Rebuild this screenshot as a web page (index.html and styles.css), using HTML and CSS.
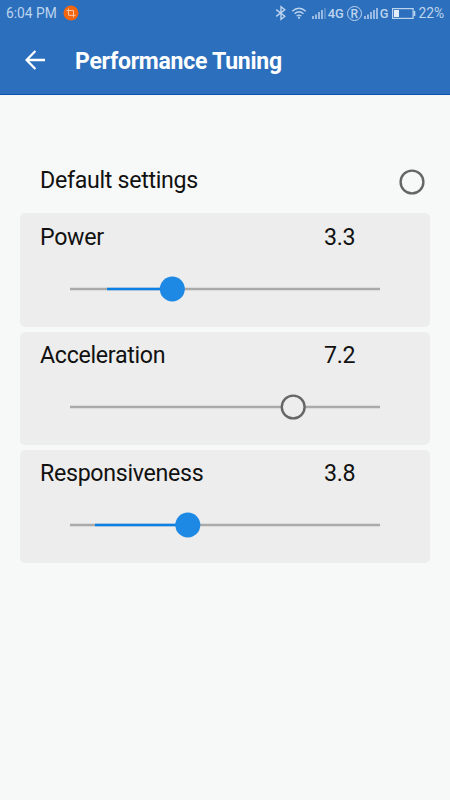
FILE: index.html
```html
<!DOCTYPE html>
<html lang="en">
    <head>
        <meta charset="UTF-8">
        <title>Performance Tuning</title>
        <link rel="stylesheet" href="styles.css">
    </head>
    <body>
        <header class="header">
            <div class="status-bar">
                <span class="clock">6:04 PM</span>
                <svg class="crop-icon" width="16" height="16" viewBox="0 0 16 16">
                    <circle cx="8" cy="8" r="7.5" fill="#f4650f"/>
                    <path d="M5.5 3.5v6.8h7M3.5 5.5h7v6.8" fill="none" stroke="#ffc9a8" stroke-width="1"/>
                </svg>
                <div class="status-icons">
                    <svg class="bluetooth" width="12" height="16" viewBox="0 0 12 16">
                        <path d="M1.2 4.6L9.8 11.3L6 14.3V1.7L9.8 4.7L1.2 11.4" fill="none" stroke="#bdd4ee" stroke-width="1.4"/>
                    </svg>
                    <svg class="wifi" width="16" height="14" viewBox="0 0 16 14">
                        <g fill="none" stroke="#bdd4ee" stroke-width="1.3">
                            <path d="M1.2 5.2Q8 -0.8 14.8 5.2"/>
                            <path d="M3.5 7.7Q8 3.8 12.5 7.7"/>
                            <path d="M5.6 10Q8 8.2 10.4 10"/>
                        </g>
                        <circle cx="8" cy="11.7" r="1.1" fill="#bdd4ee"/>
                    </svg>
                    <svg class="signal" width="14" height="12" viewBox="0 0 14 12">
                        <path d="M1 9v3M4 7.5V12M7 5V12M10 3V12" stroke="#bdd4ee" stroke-width="1.5"/>
                        <path d="M13 1v11" stroke="#7ea6d8" stroke-width="1.1"/>
                    </svg>
                    <span class="network">4G</span>
                    <span class="roaming">R</span>
                    <svg class="signal" width="14" height="12" viewBox="0 0 14 12">
                        <path d="M1 9v3M4 7.5V12M7 5V12M10 3V12M13 1v11" stroke="#bdd4ee" stroke-width="1.5"/>
                    </svg>
                    <span class="network">G</span>
                    <svg class="battery" width="24" height="11" viewBox="0 0 24 11">
                        <rect x="0.6" y="0.6" width="20.5" height="9.8" fill="none" stroke="#bdd4ee" stroke-width="1.2"/>
                        <rect x="2" y="2" width="5" height="7" fill="#e3eefa"/>
                        <path d="M22.5 3v5" stroke="#bdd4ee" stroke-width="1.6"/>
                    </svg>
                    <span class="percent">22%</span>
                </div>
            </div>
            <div class="title-bar">
                <svg class="back" width="20" height="20" viewBox="0 0 20 20">
                    <path d="M20 10H1.6M10.4 1L1.5 10L10.4 19" fill="none" stroke="#fff" stroke-width="2.3"/>
                </svg>
                <h1>Performance Tuning</h1>
            </div>
        </header>
        <main class="settings">
            <div class="default-row">
                <span>Default settings</span>
                <svg class="radio" width="26" height="26" viewBox="0 0 26 26">
                    <circle class="ring" cx="13" cy="13" r="11.4"/>
                </svg>
            </div>
            <div class="card">
                <div class="card-head">
                    <span>Power</span>
                    <span class="value">3.3</span>
                </div>
                <svg class="slider" width="310" height="26" viewBox="0 0 310 26">
                    <path class="track" d="M0 13H310"/>
                    <path class="fill" d="M37 13H102"/>
                    <circle class="thumb" cx="102.3" cy="13" r="12.5"/>
                </svg>
            </div>
            <div class="card">
                <div class="card-head">
                    <span>Acceleration</span>
                    <span class="value">7.2</span>
                </div>
                <svg class="slider" width="310" height="26" viewBox="0 0 310 26">
                    <path class="track" d="M0 13H310"/>
                    <circle class="ring" cx="223.2" cy="13" r="11.4"/>
                </svg>
            </div>
            <div class="card">
                <div class="card-head">
                    <span>Responsiveness</span>
                    <span class="value">3.8</span>
                </div>
                <svg class="slider" width="310" height="26" viewBox="0 0 310 26">
                    <path class="track" d="M0 13H310"/>
                    <path class="fill" d="M25 13H118"/>
                    <circle class="thumb" cx="117.8" cy="13" r="12.5"/>
                </svg>
            </div>
        </main>
    </body>
</html>
```
FILE: styles.css
```css
* {
    box-sizing: border-box;
}
body {
    margin: 0;
    height: 800px;
    background: #f7f9f8;
    font-family: Roboto, sans-serif;
    color: #111;
}
.header {
    height: 95px;
    background: #2c6fbc;
    border-bottom: 1px solid #0b52ae;
}
.status-bar {
    display: flex;
    align-items: center;
    height: 26px;
    padding: 0 6px 0 6px;
    color: #bdd4ee;
    font-size: 13.8px;
}
.crop-icon {
    margin-left: 6px;
}
.status-icons {
    display: flex;
    align-items: center;
    margin-left: auto;
}
.wifi {
    margin-left: 4px;
}
.signal {
    margin-left: 5px;
    margin-top: -1px;
}
.network {
    margin-left: 2px;
    font-size: 12.8px;
    font-weight: 500;
}
.roaming {
    width: 15px;
    height: 15px;
    margin-left: 3px;
    border: 1px solid #bdd4ee;
    border-radius: 50%;
    font-size: 12px;
    font-weight: 500;
    line-height: 14px;
    text-align: center;
}
.roaming + .signal {
    margin-left: 2px;
}
.battery {
    margin-left: 4px;
}
.percent {
    margin-left: 2px;
}
.title-bar {
    display: flex;
    align-items: center;
    height: 68px;
    padding-left: 25px;
}
.title-bar h1 {
    margin: 2px 0 0 30px;
    color: #fff;
    font-size: 23px;
    font-weight: 700;
    letter-spacing: -0.25px;
}
.settings {
    display: flex;
    flex-direction: column;
    gap: 5px;
    padding: 65px 20px 0;
    font-size: 23.2px;
    letter-spacing: -0.3px;
}
.default-row {
    display: flex;
    align-items: center;
    justify-content: space-between;
    height: 48.3px;
    padding: 0 5px 9px 20px;
}
.radio {
    margin-top: 4px;
}
.card {
    height: 113.4px;
    padding: 9.3px 50px 0 20px;
    background: #ededed;
    border-radius: 5px;
}
.card-head {
    display: flex;
    justify-content: space-between;
    line-height: 28px;
}
.value {
    width: 56px;
}
.slider {
    display: block;
    margin: 25px 0 0 30px;
    overflow: visible;
}
.track {
    stroke: #aaa;
    stroke-width: 2.5;
}
.fill {
    stroke: #0b80e4;
    stroke-width: 2.5;
}
.thumb {
    fill: #1e88e5;
}
.ring {
    fill: none;
    stroke: #666;
    stroke-width: 2.4;
}
.slider .ring {
    fill: #ededed;
}
```
